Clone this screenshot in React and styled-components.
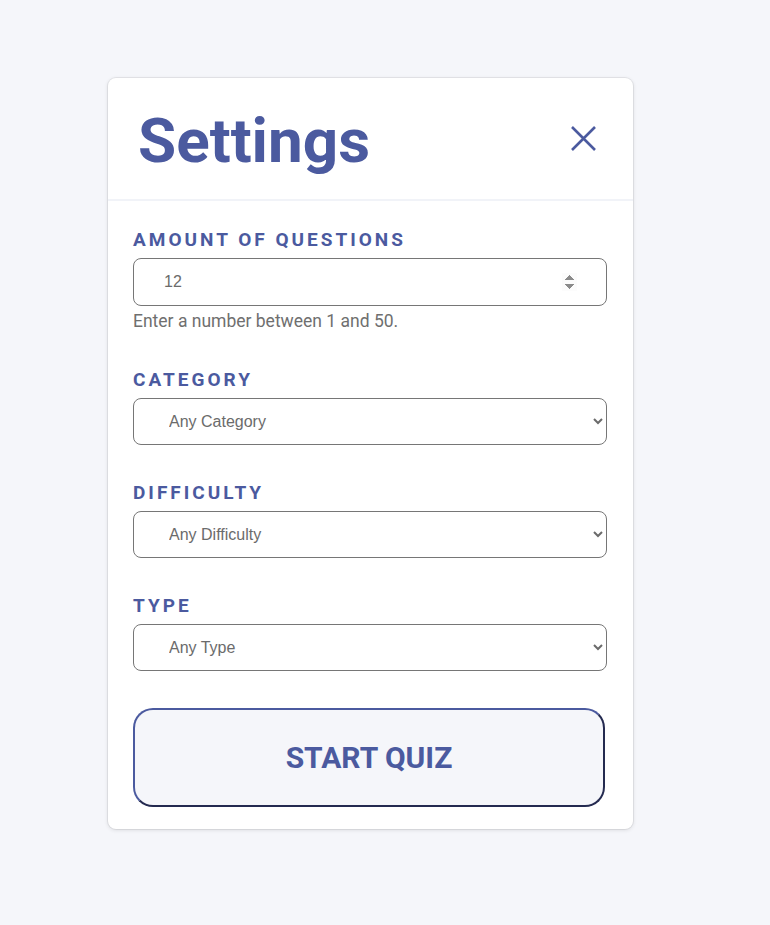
import React from "react";
import styled, { createGlobalStyle } from "styled-components";

const Global = createGlobalStyle`
  html, body { margin: 0; padding: 0; background: #f5f6fa; }
  body { font-family: Roboto, "Liberation Sans", sans-serif; }
  * { box-sizing: border-box; }
`;

const Page = styled.div`
  min-height: 925px;
  padding: 78px 0 0 108px;
`;

const Card = styled.div`
  width: 525px;
  background: #fff;
  border-radius: 8px;
  box-shadow: 0 0 0 1px rgba(0,0,0,0.06), 0 1px 4px rgba(0,0,0,0.12);
`;

const Header = styled.div`
  display: flex;
  align-items: center;
  justify-content: space-between;
  height: 123px;
  padding: 0 36px 0 30px;
  border-bottom: 2px solid #f1f3f8;
`;

const Title = styled.h1`
  margin: 0;
  font-family: Roboto, sans-serif;
  font-weight: 700;
  font-size: 62px;
  color: #4b5a9f;
  line-height: 1;
  padding-top: 4px;
`;

const CloseBtn = styled.button`
  border: none;
  background: none;
  padding: 0;
  width: 28px;
  height: 28px;
  display: flex;
  align-items: center;
  justify-content: center;
  cursor: pointer;
`;

const Body = styled.div`
  padding: 28px 26px 22px 25px;
  display: flex;
  flex-direction: column;
  gap: 37px;
`;

const Group = styled.div`
  display: flex;
  flex-direction: column;
`;

const Label = styled.label`
  font-family: Roboto, sans-serif;
  font-weight: 700;
  font-size: 19px;
  line-height: 22px;
  letter-spacing: 3px;
  color: #4b5a9f;
  margin-bottom: 7px;
`;

const fieldBase = `
  width: 474px;
  height: 47px;
  border: 1px solid #767676;
  border-radius: 8px;
  background: #fff;
  font-family: "Liberation Sans", Arial, sans-serif;
  font-size: 16px;
  color: #6b6b6b;
  outline: none;
`;

const NumberInput = styled.input`
  ${fieldBase}
  height: 48px;
  padding: 0 29px 0 30px;
  &::-webkit-inner-spin-button,
  &::-webkit-outer-spin-button {
    opacity: 1;
  }
`;

const Select = styled.select`
  ${fieldBase}
  padding: 0 10px 0 31px;
`;

const Help = styled.div`
  font-family: Roboto, sans-serif;
  font-size: 17.5px;
  line-height: 22px;
  color: #6f6f6f;
  margin-top: 4px;
`;

const StartBtn = styled.button`
  width: 472px;
  height: 99px;
  border-radius: 20px;
  border: 2px solid;
  border-color: #4b5a9f #242a50 #242a50 #4b5a9f;
  background: #f5f6fa;
  font-family: Roboto, sans-serif;
  font-weight: 700;
  font-size: 30px;
  color: #4b5a9f;
  cursor: pointer;
`;

export default function App() {
  return (
    <>
      <Global />
      <Page>
        <Card>
          <Header>
            <Title>Settings</Title>
            <CloseBtn aria-label="close">
              <svg width="27" height="27" viewBox="0 0 27 27">
                <path d="M2 2 L25 25 M25 2 L2 25" stroke="#4b5a9f" strokeWidth="2.6" fill="none" />
              </svg>
            </CloseBtn>
          </Header>
          <Body>
            <Group>
              <Label>AMOUNT OF QUESTIONS</Label>
              <NumberInput type="number" defaultValue={12} min={1} max={50} />
              <Help>Enter a number between 1 and 50.</Help>
            </Group>
            <Group>
              <Label>CATEGORY</Label>
              <Select defaultValue="any">
                <option value="any">Any Category</option>
              </Select>
            </Group>
            <Group>
              <Label>DIFFICULTY</Label>
              <Select defaultValue="any">
                <option value="any">Any Difficulty</option>
              </Select>
            </Group>
            <Group>
              <Label>TYPE</Label>
              <Select defaultValue="any">
                <option value="any">Any Type</option>
              </Select>
            </Group>
            <StartBtn>START QUIZ</StartBtn>
          </Body>
        </Card>
      </Page>
    </>
  );
}
